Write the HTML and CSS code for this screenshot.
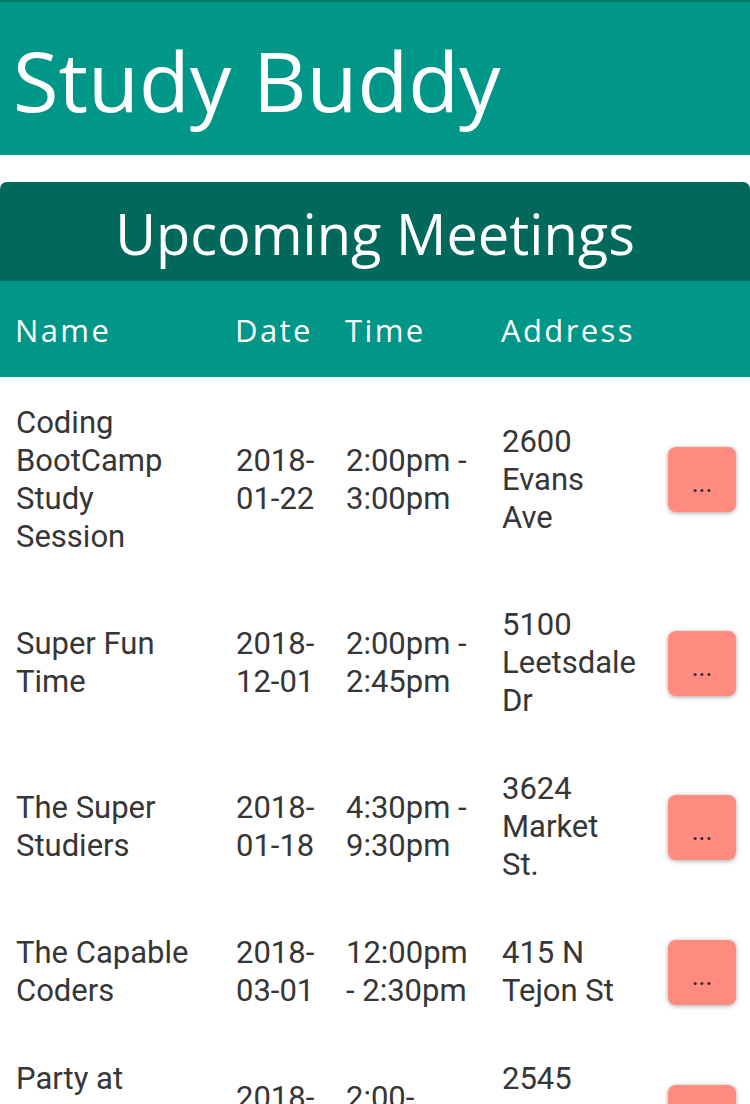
FILE: index.html
```html
<!DOCTYPE html>
<html lang="en">
<head>
<meta charset="utf-8">
<title>Study Buddy</title>
<link rel="stylesheet" href="styles.css">
</head>
<body>
<header class="app-bar">
  <h1 class="app-title">Study Buddy</h1>
</header>
<main class="card">
  <h2 class="card-title">Upcoming Meetings</h2>
  <table class="meetings">
    <colgroup>
      <col class="col-name">
      <col class="col-date">
      <col class="col-time">
      <col class="col-addr">
      <col class="col-btn">
    </colgroup>
    <thead>
      <tr>
        <th>Name</th>
        <th>Date</th>
        <th>Time</th>
        <th>Address</th>
        <th></th>
      </tr>
    </thead>
    <tbody>
      <tr>
        <td>Coding BootCamp Study Session</td>
        <td>2018-01-22</td>
        <td>2:00pm - 3:00pm</td>
        <td>2600 Evans Ave</td>
        <td><button class="more">...</button></td>
      </tr>
      <tr>
        <td>Super Fun Time</td>
        <td>2018-12-01</td>
        <td>2:00pm - 2:45pm</td>
        <td>5100 Leetsdale Dr</td>
        <td><button class="more">...</button></td>
      </tr>
      <tr>
        <td>The Super Studiers</td>
        <td>2018-01-18</td>
        <td>4:30pm - 9:30pm</td>
        <td>3624 Market St.</td>
        <td><button class="more">...</button></td>
      </tr>
      <tr>
        <td>The Capable Coders</td>
        <td>2018-03-01</td>
        <td>12:00pm - 2:30pm</td>
        <td>415 N Tejon St</td>
        <td><button class="more">...</button></td>
      </tr>
      <tr>
        <td>Party at Brandon's House</td>
        <td>2018-02-14</td>
        <td>2:00-4:00pm</td>
        <td>2545 Pearl St. Boulder</td>
        <td><button class="more">...</button></td>
      </tr>
    </tbody>
  </table>
</main>
</body>
</html>
```

FILE: styles.css
```css
* {
  box-sizing: border-box;
}

html, body {
  margin: 0;
  padding: 0;
  background: #ffffff;
}

body {
  font-family: Roboto, "Liberation Sans", sans-serif;
  color: #363636;
}

.app-bar {
  background: #009688;
  border-top: 2px solid #00796b;
  height: 155px;
  display: flex;
  align-items: center;
  padding: 0 13px;
}

.app-title {
  margin: 0;
  font-family: "Open Sans", "Liberation Sans", sans-serif;
  font-weight: 400;
  font-size: 83px;
  line-height: 1;
  color: #ffffff;
  padding-top: 2px;
}

.card {
  margin-top: 27px;
  border-radius: 7px 7px 0 0;
  overflow: hidden;
  box-shadow: 0 0 1px rgba(0, 0, 0, 0.35);
}

.card-title {
  margin: 0;
  height: 99px;
  background: #00695c;
  color: #ffffff;
  font-family: "Open Sans", "Liberation Sans", sans-serif;
  font-weight: 400;
  font-size: 56px;
  line-height: 99px;
  text-align: center;
  padding-top: 2px;
}

.meetings {
  width: 100%;
  border-collapse: collapse;
  table-layout: fixed;
}

.col-name { width: 220px; }
.col-date { width: 110px; }
.col-time { width: 156px; }
.col-addr { width: 166px; }
.col-btn { width: 98px; }

.meetings thead tr {
  background: #009688;
  height: 96px;
}

.meetings th {
  font-family: "Open Sans", "Liberation Sans", sans-serif;
  font-weight: 400;
  font-size: 31px;
  letter-spacing: 2.4px;
  color: #ffffff;
  text-align: left;
  padding: 2px 6px 0 15px;
  vertical-align: middle;
  white-space: nowrap;
}

.meetings td {
  font-size: 31px;
  line-height: 38px;
  padding: 25px 10px 25px 16px;
  vertical-align: middle;
  text-align: left;
}

.meetings tbody tr:first-child td {
  padding-top: 27px;
}

.meetings td:last-child,
.meetings tbody tr:first-child td:last-child {
  padding: 0 14px 0 16px;
}

.more {
  display: block;
  width: 68px;
  height: 65px;
  border: none;
  border-radius: 8px;
  background: #ff8a80;
  box-shadow: 0 1px 5px rgba(0, 0, 0, 0.35);
  color: #222222;
  font-family: Roboto, "Liberation Sans", sans-serif;
  font-size: 26px;
  line-height: 65px;
  padding: 4px 0 0 0;
  text-align: center;
  cursor: pointer;
}
```
